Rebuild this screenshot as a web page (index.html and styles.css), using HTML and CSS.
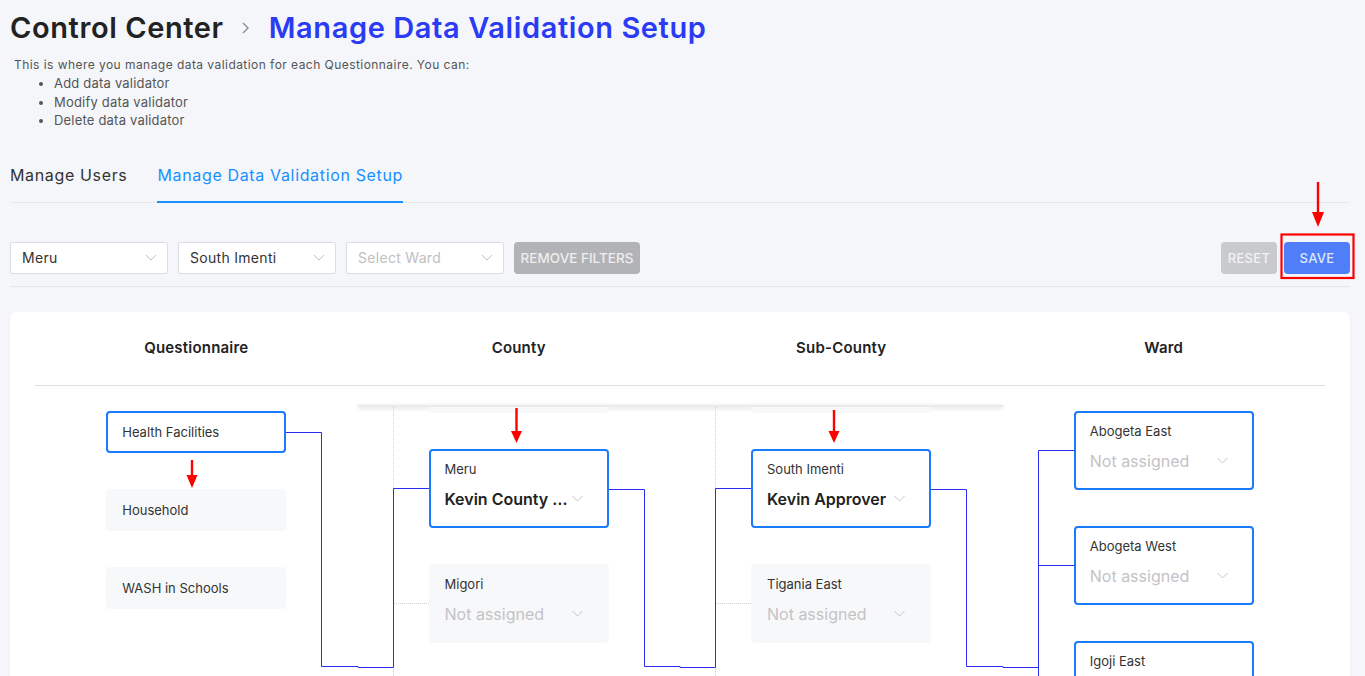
FILE: index.html
```html
<!DOCTYPE html>
<html>
	<head>
		<meta charset="UTF-8">
		<title>Manage Data Validation Setup</title>
		<link rel="stylesheet" href="styles.css">
	</head>
	<body>
		<div class="page">
			<div class="crumbs">
				<h1 class="crumb">Control Center</h1>
				<svg class="crumb-sep" width="10" height="14" viewBox="0 0 10 14"><path d="M2 2l5 5-5 5" fill="none" stroke="#8a8d94" stroke-width="1.4"/></svg>
				<h1 class="crumb crumb-current">Manage Data Validation Setup</h1>
			</div>
			<p class="intro">This is where you manage data validation for each Questionnaire. You can:</p>
			<ul class="intro-list">
				<li>Add data validator</li>
				<li>Modify data validator</li>
				<li>Delete data validator</li>
			</ul>

			<div class="tabs">
				<div class="tab">Manage Users</div>
				<div class="tab active">Manage Data Validation Setup</div>
			</div>

			<div class="toolbar">
				<div class="filters">
					<div class="select">
						<span>Meru</span>
						<svg width="12" height="7" viewBox="0 0 12 7"><path d="M1 1l5 5 5-5" fill="none" stroke="#bfbfbf"/></svg>
					</div>
					<div class="select">
						<span>South Imenti</span>
						<svg width="12" height="7" viewBox="0 0 12 7"><path d="M1 1l5 5 5-5" fill="none" stroke="#bfbfbf"/></svg>
					</div>
					<div class="select placeholder">
						<span>Select Ward</span>
						<svg width="12" height="7" viewBox="0 0 12 7"><path d="M1 1l5 5 5-5" fill="none" stroke="#bfbfbf"/></svg>
					</div>
					<button class="btn btn-muted">Remove filters</button>
				</div>
				<div class="actions">
					<button class="btn btn-reset">Reset</button>
					<button class="btn btn-save">Save</button>
				</div>
			</div>

			<div class="card">
				<div class="card-head">
					<div>Questionnaire</div>
					<div>County</div>
					<div>Sub-County</div>
					<div>Ward</div>
				</div>
				<div class="card-body">
					<!-- questionnaires -->
					<div class="col col-plain">
						<div class="q-item active">Health Facilities</div>
						<div class="q-item">Household</div>
						<div class="q-item">WASH in Schools</div>
					</div>

					<!-- counties -->
					<div class="col col-scroll">
						<div class="scroll-edge"></div>
						<div class="tree">
							<div class="node ghost"></div>
							<div class="node active">
								<div class="node-label">Meru</div>
								<div class="node-value">
									<span class="value-text">Kevin County …</span>
									<svg width="11" height="7" viewBox="0 0 11 7"><path d="M0.5 1l5 5 5-5" fill="none" stroke="#c4c4c4"/></svg>
								</div>
							</div>
							<div class="node">
								<div class="node-label">Migori</div>
								<div class="node-value empty">
									<span class="value-text">Not assigned</span>
									<svg width="11" height="7" viewBox="0 0 11 7"><path d="M0.5 1l5 5 5-5" fill="none" stroke="#c4c4c4"/></svg>
								</div>
							</div>
						</div>
					</div>

					<!-- sub-counties -->
					<div class="col col-scroll">
						<div class="scroll-edge"></div>
						<div class="tree">
							<div class="node ghost"></div>
							<div class="node active">
								<div class="node-label">South Imenti</div>
								<div class="node-value">
									<span class="value-text">Kevin Approver</span>
									<svg width="11" height="7" viewBox="0 0 11 7"><path d="M0.5 1l5 5 5-5" fill="none" stroke="#c4c4c4"/></svg>
								</div>
							</div>
							<div class="node">
								<div class="node-label">Tigania East</div>
								<div class="node-value empty">
									<span class="value-text">Not assigned</span>
									<svg width="11" height="7" viewBox="0 0 11 7"><path d="M0.5 1l5 5 5-5" fill="none" stroke="#c4c4c4"/></svg>
								</div>
							</div>
						</div>
					</div>

					<!-- wards -->
					<div class="col col-plain">
						<div class="node active">
							<div class="node-label">Abogeta East</div>
							<div class="node-value empty">
								<span class="value-text">Not assigned</span>
								<svg width="11" height="7" viewBox="0 0 11 7"><path d="M0.5 1l5 5 5-5" fill="none" stroke="#c4c4c4"/></svg>
							</div>
						</div>
						<div class="node active">
							<div class="node-label">Abogeta West</div>
							<div class="node-value empty">
								<span class="value-text">Not assigned</span>
								<svg width="11" height="7" viewBox="0 0 11 7"><path d="M0.5 1l5 5 5-5" fill="none" stroke="#c4c4c4"/></svg>
							</div>
						</div>
						<div class="node active">
							<div class="node-label">Igoji East</div>
							<div class="node-value empty">
								<span class="value-text">Not assigned</span>
								<svg width="11" height="7" viewBox="0 0 11 7"><path d="M0.5 1l5 5 5-5" fill="none" stroke="#c4c4c4"/></svg>
							</div>
						</div>
					</div>
				</div>
			</div>
		</div>

		<!-- connectors between the columns and the red review marks -->
		<svg class="overlay" width="1365" height="720" viewBox="0 0 1365 720">
			<g fill="none" stroke="#2b2bf6" stroke-width="1">
				<path d="M286 432.5H321.5V666.5H358V667.5H393.5V488.5H429"/>
				<path d="M609 489.5H644.5V666.5H680V667.5H715.5V488.5H751"/>
				<path d="M931 489.5H966.5V666.5H1003V667.5H1038.5V450.5H1074"/>
				<path d="M1038.5 565.5H1074"/>
				<path d="M1038.5 667V720"/>
			</g>
			<g fill="#ff0000" stroke="#ff0000">
				<rect x="1281.5" y="234.5" width="72" height="43.5" fill="none" stroke-width="2.2"/>
				<path d="M1318 182V214" stroke-width="2.4"/>
				<path d="M1312 212H1324L1318 227Z" stroke="none"/>
				<path d="M192 460V477" stroke-width="2.4"/>
				<path d="M186.5 475H197.5L192 488Z" stroke="none"/>
				<path d="M516.5 408V433" stroke-width="2.4"/>
				<path d="M511 431H522L516.5 443Z" stroke="none"/>
				<path d="M834 410V433" stroke-width="2.4"/>
				<path d="M828.5 431H839.5L834 443Z" stroke="none"/>
			</g>
		</svg>
	</body>
</html>
```

FILE: styles.css
```css
* {
	margin: 0;
	padding: 0;
	box-sizing: border-box;
}

body {
	background: #f4f6fa;
	font-family: "Inter", "Noto Sans", sans-serif;
	color: #333333;
	overflow: hidden;
}

.page {
	margin: 0 15px 0 10px;
	padding-top: 9px;
}

/* title */
.crumbs {
	display: flex;
	align-items: center;
	height: 38px;
}

.crumb {
	font-size: 29px;
	font-weight: 600;
	line-height: 38px;
	color: #222222;
	letter-spacing: 0.6px;
}

.crumb-current {
	color: #2a3af5;
}

.crumb-sep {
	margin: 0 18px 0 17px;
}

.intro {
	margin-top: 9px;
	padding-left: 4px;
	font-size: 12px;
	line-height: 18px;
	letter-spacing: 0.45px;
	color: #555555;
}

.intro-list {
	padding-left: 44px;
	font-size: 13px;
	line-height: 18.5px;
	letter-spacing: 0.2px;
	color: #555555;
}

/* tabs */
.tabs {
	display: flex;
	gap: 30px;
	margin-top: 33px;
	border-bottom: 1px solid #e6e8ec;
}

.tab {
	font-size: 16px;
	line-height: 24px;
	letter-spacing: 0.65px;
	padding-bottom: 14px;
	border-bottom: 2px solid transparent;
	margin-bottom: -1px;
	color: #333333;
}

.tab.active {
	color: #1890ff;
	border-bottom-color: #1890ff;
}

/* filters */
.toolbar {
	display: flex;
	justify-content: space-between;
	margin-top: 39px;
	padding-bottom: 12px;
	border-bottom: 1px solid #e3e5e9;
}

.filters,
.actions {
	display: flex;
	gap: 10px;
}

.actions {
	gap: 7px;
}

.select {
	display: flex;
	align-items: center;
	justify-content: space-between;
	width: 158px;
	height: 32px;
	padding: 0 10px 0 11px;
	background: #ffffff;
	border: 1px solid #dcdde0;
	border-radius: 2px;
	font-size: 14px;
	letter-spacing: 0.3px;
	color: #333333;
}

.select.placeholder {
	color: #c0c0c0;
}

.btn {
	height: 32px;
	border: none;
	border-radius: 4px;
	font-family: inherit;
	font-weight: 500;
	text-transform: uppercase;
}

.btn-muted {
	width: 126px;
	background: #b2b3b6;
	color: #eeeeee;
	font-size: 13.5px;
}

.btn-reset {
	width: 56px;
	background: #c9cacd;
	color: #f2f2f2;
	font-size: 13px;
	letter-spacing: 0.3px;
}

.btn-save {
	width: 66px;
	background: #4f7ef8;
	color: #dde7ff;
	font-size: 13px;
	letter-spacing: 0.3px;
}

/* validation tree */
.card {
	margin-top: 25px;
	padding: 0 25px;
	background: #ffffff;
	border-radius: 6px;
	box-shadow: 0 1px 3px rgba(0, 0, 0, 0.04);
}

.card-head {
	display: grid;
	grid-template-columns: repeat(4, 1fr);
	padding: 25px 0 26px;
	border-bottom: 1px solid #dfdfe9;
	text-align: center;
	font-size: 15px;
	font-weight: 600;
	line-height: 22px;
	letter-spacing: 0.2px;
	color: #222222;
}

.card-body {
	display: grid;
	grid-template-columns: repeat(4, 1fr);
	height: 420px;
}

.col-plain {
	display: flex;
	flex-direction: column;
	align-items: center;
	gap: 36px;
	padding-top: 25px;
}

.col-scroll {
	padding-top: 19px;
}

.scroll-edge {
	height: 2px;
	background: #ebebeb;
	box-shadow: 0 1px 4px rgba(0, 0, 0, 0.18);
}

.tree {
	display: flex;
	flex-direction: column;
	gap: 36px;
	height: 100%;
	margin-left: 35px;
	padding-left: 35px;
	border-left: 1px dotted #cfcfd4;
}

.q-item {
	width: 180px;
	height: 42px;
	padding: 0 14px;
	display: flex;
	align-items: center;
	font-size: 13px;
	color: #333333;
	background: #f7f8fa;
	border: 2px solid transparent;
	border-radius: 4px;
}

.q-item.active {
	background: #ffffff;
	border-color: #1a7bff;
}

.node {
	position: relative;
	width: 180px;
	height: 79px;
	padding: 9px 14px 0;
	background: #f7f8fa;
	border: 2px solid transparent;
	border-radius: 4px;
	flex-shrink: 0;
}

.tree .node:before {
	content: '';
	position: absolute;
	left: -38px;
	top: 50%;
	width: 36px;
	border-top: 1px dotted #cfcfd4;
}

.node.active {
	background: #ffffff;
	border-color: #1a7bff;
}

.node.ghost {
	height: 6px;
	padding: 0;
	border: none;
	border-radius: 0 0 4px 4px;
}

.node.ghost:before {
	display: none;
}

.node-label {
	font-size: 13px;
	line-height: 18px;
	color: #333333;
}

.node-value {
	display: flex;
	align-items: center;
	justify-content: space-between;
	width: 138px;
	margin-top: 9px;
	height: 24px;
	font-size: 16px;
	font-weight: 600;
	color: #222222;
}

.value-text {
	white-space: nowrap;
}

.node-value.empty {
	font-weight: 400;
	color: #c3c3c6;
}

.overlay {
	position: absolute;
	left: 0;
	top: 0;
	pointer-events: none;
}
```
